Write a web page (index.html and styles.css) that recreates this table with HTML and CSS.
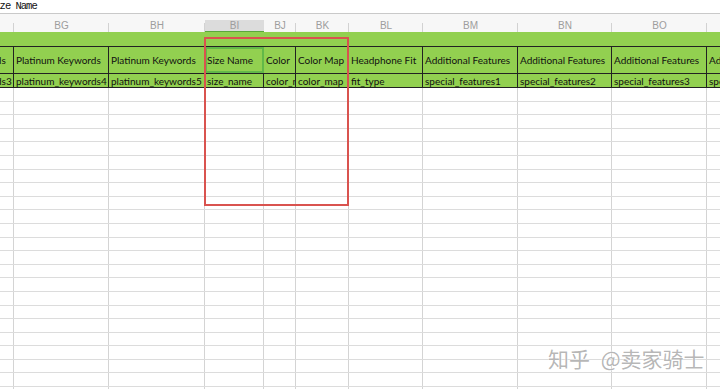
FILE: index.html
```html
<!DOCTYPE html>
<html>
<head>
<meta charset="utf-8">
<link rel="stylesheet" href="styles.css">
</head>
<body>
<div class="sheet">
  <div class="fx"><span>Size Name</span></div>
  <div class="cols">
    <div class="ch"><b></b></div>
    <div class="ch"><b>BG</b></div>
    <div class="ch"><b>BH</b></div>
    <div class="ch sel"><b>BI</b></div>
    <div class="ch"><b>BJ</b></div>
    <div class="ch"><b>BK</b></div>
    <div class="ch"><b>BL</b></div>
    <div class="ch"><b>BM</b></div>
    <div class="ch"><b>BN</b></div>
    <div class="ch"><b>BO</b></div>
    <div class="ch last"><b></b></div>
  </div>
  <div class="band">
    <div class="hrow">
      <div class="lead"><span>Platinum Keywords</span></div>
      <div>Platinum Keywords</div>
      <div>Platinum Keywords</div>
      <div class="sel">Size Name</div>
      <div>Color</div>
      <div>Color Map</div>
      <div>Headphone Fit</div>
      <div>Additional Features</div>
      <div>Additional Features</div>
      <div>Additional Features</div>
      <div class="end">Additional Features</div>
    </div>
    <div class="drow">
      <div class="lead"><span>platinum_keywords3</span></div>
      <div>platinum_keywords4</div>
      <div>platinum_keywords5</div>
      <div>size_name</div>
      <div>color_name</div>
      <div>color_map</div>
      <div>fit_type</div>
      <div>special_features1</div>
      <div>special_features2</div>
      <div>special_features3</div>
      <div class="end">special_features4</div>
    </div>
  </div>
  <div class="grid">
    <div class="row"><i></i><i></i><i></i><i></i><i></i><i></i><i></i><i></i><i></i><i></i><i></i></div>
    <div class="row"><i></i><i></i><i></i><i></i><i></i><i></i><i></i><i></i><i></i><i></i><i></i></div>
    <div class="row"><i></i><i></i><i></i><i></i><i></i><i></i><i></i><i></i><i></i><i></i><i></i></div>
    <div class="row"><i></i><i></i><i></i><i></i><i></i><i></i><i></i><i></i><i></i><i></i><i></i></div>
    <div class="row"><i></i><i></i><i></i><i></i><i></i><i></i><i></i><i></i><i></i><i></i><i></i></div>
    <div class="row"><i></i><i></i><i></i><i></i><i></i><i></i><i></i><i></i><i></i><i></i><i></i></div>
    <div class="row"><i></i><i></i><i></i><i></i><i></i><i></i><i></i><i></i><i></i><i></i><i></i></div>
    <div class="row"><i></i><i></i><i></i><i></i><i></i><i></i><i></i><i></i><i></i><i></i><i></i></div>
    <div class="row"><i></i><i></i><i></i><i></i><i></i><i></i><i></i><i></i><i></i><i></i><i></i></div>
    <div class="row"><i></i><i></i><i></i><i></i><i></i><i></i><i></i><i></i><i></i><i></i><i></i></div>
    <div class="row"><i></i><i></i><i></i><i></i><i></i><i></i><i></i><i></i><i></i><i></i><i></i></div>
    <div class="row"><i></i><i></i><i></i><i></i><i></i><i></i><i></i><i></i><i></i><i></i><i></i></div>
    <div class="row"><i></i><i></i><i></i><i></i><i></i><i></i><i></i><i></i><i></i><i></i><i></i></div>
    <div class="row"><i></i><i></i><i></i><i></i><i></i><i></i><i></i><i></i><i></i><i></i><i></i></div>
    <div class="row"><i></i><i></i><i></i><i></i><i></i><i></i><i></i><i></i><i></i><i></i><i></i></div>
    <div class="row"><i></i><i></i><i></i><i></i><i></i><i></i><i></i><i></i><i></i><i></i><i></i></div>
    <div class="row"><i></i><i></i><i></i><i></i><i></i><i></i><i></i><i></i><i></i><i></i><i></i></div>
    <div class="row"><i></i><i></i><i></i><i></i><i></i><i></i><i></i><i></i><i></i><i></i><i></i></div>
    <div class="row"><i></i><i></i><i></i><i></i><i></i><i></i><i></i><i></i><i></i><i></i><i></i></div>
    <div class="row"><i></i><i></i><i></i><i></i><i></i><i></i><i></i><i></i><i></i><i></i><i></i></div>
    <div class="row"><i></i><i></i><i></i><i></i><i></i><i></i><i></i><i></i><i></i><i></i><i></i></div>
    <div class="row"><i></i><i></i><i></i><i></i><i></i><i></i><i></i><i></i><i></i><i></i><i></i></div>
    <div class="row"><i></i><i></i><i></i><i></i><i></i><i></i><i></i><i></i><i></i><i></i><i></i></div>
  </div>
  <div class="redbox"></div>
  <div class="wm">知乎 @卖家骑士</div>
</div>
</body>
</html>
```

FILE: styles.css
```css
* { box-sizing: border-box; margin: 0; padding: 0; }
html, body { width: 720px; height: 389px; overflow: hidden; background: #fff; }
body { font-family: Lato, "Liberation Sans", sans-serif; }

.sheet { position: relative; height: 389px; overflow: hidden; }

.fx {
  height: 14px;
  border-bottom: 1px solid #c9c9c9;
  font: 400 10.5px/13px "Liberation Mono", monospace;
  letter-spacing: -1px;
  color: #111;
  white-space: nowrap;
  overflow: hidden;
}
.fx span { display: inline-block; margin-left: -11px; }

.cols, .hrow, .drow, .row {
  display: grid;
  grid-template-columns: 14px 95px 96px 59px 32px 53px 74px 95px 94px 95px 1fr;
}

.cols { height: 18px; background: #f7f7f7; }
.ch {
  display: flex;
  align-items: flex-end;
  background: linear-gradient(#d2d2d2, #d2d2d2) no-repeat right bottom / 1px 9px;
}
.ch.last { background: none; }
.ch b {
  flex: 1;
  height: 12px;
  font: 400 10px/12px "Liberation Sans", sans-serif;
  color: #9d9d9d;
  text-align: center;
}
.ch.sel b { background: #dcdcdc; border-bottom: 1px solid #5aa83c; line-height: 11px; }

.band { background: #92d050; padding-top: 14px; border-bottom: 1px solid #222; }
.hrow { height: 27px; border-top: 1px solid #222; }
.drow { height: 14px; border-top: 1px solid #222; }
.hrow > div, .drow > div {
  display: flex;
  align-items: center;
  padding-left: 2px;
  border-right: 1px solid #222;
  overflow: hidden;
  white-space: nowrap;
  font-size: 10px;
  color: #111;
}
.hrow > .end, .drow > .end { border-right: none; }
.hrow > .lead, .drow > .lead { justify-content: flex-end; padding-left: 0; }
.lead span { flex-shrink: 0; width: 94px; padding-left: 2px; }
.hrow > .sel { outline: 2px solid #62b848; outline-offset: -2px; }

.row { height: 13.6px; border-bottom: 1px solid #dcdcdc; }
.row i { display: block; border-right: 1px solid #d4d4d4; }
.row i:last-child { border-right: none; }

.redbox {
  position: absolute;
  left: 204px;
  top: 37px;
  width: 145px;
  height: 169px;
  border: 2px solid #d9534f;
}

.wm {
  position: absolute;
  left: 548px;
  top: 346px;
  font: 21px/24px "Noto Sans CJK SC", sans-serif;
  word-spacing: 6px;
  color: rgba(120, 120, 120, 0.55);
  text-shadow: 0 0 2px #fff, 0 0 1px #fff;
  white-space: nowrap;
}
```
